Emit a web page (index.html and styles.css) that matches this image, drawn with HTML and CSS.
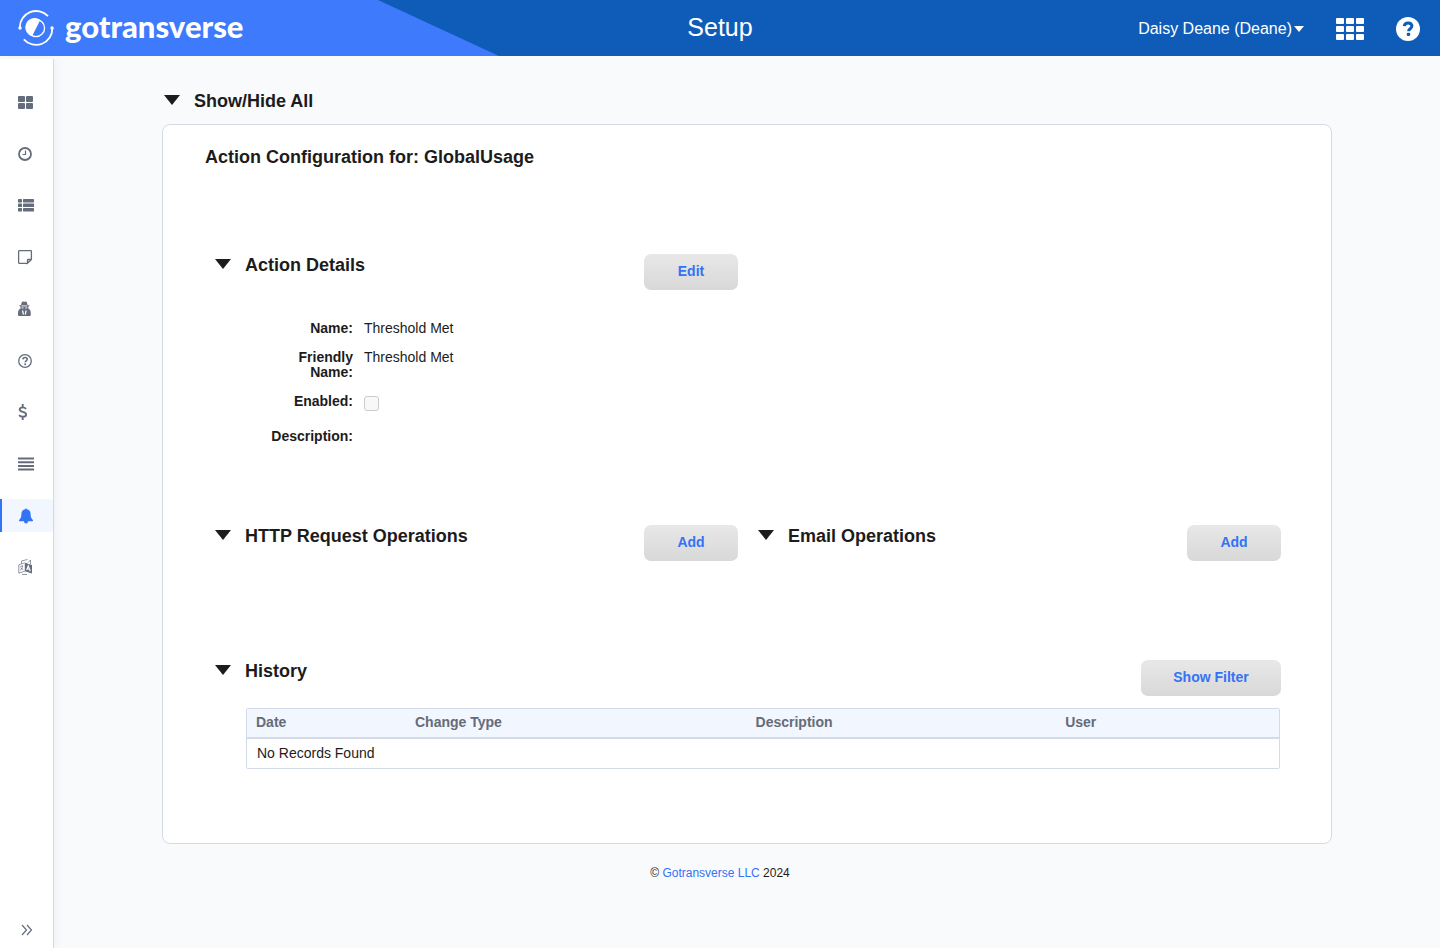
FILE: index.html
```
<!DOCTYPE html>
<html lang="en">
<head>
<meta charset="utf-8">
<title>Setup - gotransverse</title>
<link rel="stylesheet" href="styles.css">
</head>
<body>
<header class="topbar">
  <a class="brand" href="#" aria-label="gotransverse">
    <svg class="brand-mark" width="36" height="36" viewBox="0 0 36 36" fill="none" stroke="#fff" stroke-width="1.8">
      <path d="M1.8 17.5A16.3 16.3 0 0 1 30 6.2"/>
      <path d="M34.3 18A16.3 16.3 0 0 1 5.8 29.4"/>
      <circle cx="2" cy="18" r="1.7" fill="#fff" stroke="none"/>
      <circle cx="34" cy="18" r="1.7" fill="#fff" stroke="none"/>
      <circle cx="18" cy="18" r="8.6" stroke-width="1.3"/>
      <path d="M22.3 10A9.3 9.3 0 1 0 14 26.3Z" fill="#fff" stroke="none"/>
    </svg>
    <span class="brand-name">gotransverse</span>
  </a>
  <h1 class="topbar-title">Setup</h1>
  <div class="topbar-tools">
    <button class="plain user-menu" type="button">Daisy Deane (Deane)<svg width="10" height="6" viewBox="0 0 10 6"><path d="M0 0h10L5 6z" fill="currentColor"/></svg></button>
    <button class="plain" type="button" aria-label="Applications">
      <svg width="28" height="22" viewBox="0 0 28 22" fill="currentColor"><rect width="8" height="6" rx="1"/><rect x="10" width="8" height="6" rx="1"/><rect x="20" width="8" height="6" rx="1"/><rect y="8" width="8" height="6" rx="1"/><rect x="10" y="8" width="8" height="6" rx="1"/><rect x="20" y="8" width="8" height="6" rx="1"/><rect y="16" width="8" height="6" rx="1"/><rect x="10" y="16" width="8" height="6" rx="1"/><rect x="20" y="16" width="8" height="6" rx="1"/></svg>
    </button>
    <button class="plain" type="button" aria-label="Help">
      <svg width="24" height="24" viewBox="0 0 24 24"><circle cx="12" cy="12" r="12" fill="currentColor"/><path d="M8.3 9.2C8.5 7 10 5.9 12.1 5.9c2.2 0 3.8 1.3 3.8 3.200 0 2.600-3.300 2.700-3.300 5.100" fill="none" stroke="#0f5cb8" stroke-width="3"/><rect x="10.8" y="15.8" width="3.4" height="3.2" rx="1" fill="#0f5cb8"/></svg>
    </button>
  </div>
</header>
<div class="shell">
  <aside class="sidebar">
    <nav class="nav" aria-label="Main">
      <a class="nav-item" href="#" aria-label="Dashboard"><svg width="16" height="16" viewBox="0 0 16 16" fill="currentColor"><rect x="0" y="1" width="7" height="6" rx="1"/><rect x="8" y="1" width="7" height="6" rx="1"/><rect x="0" y="8" width="7" height="6" rx="1"/><rect x="8" y="8" width="7" height="6" rx="1"/></svg></a>
      <a class="nav-item" href="#" aria-label="Recent"><svg width="16" height="16" viewBox="0 0 16 16" fill="none" stroke="currentColor"><circle cx="7" cy="8" r="6" stroke-width="1.8"/><path d="M7.500 4.500v4H4.500" stroke-width="1.200"/></svg></a>
      <a class="nav-item" href="#" aria-label="List"><svg width="16" height="16" viewBox="0 0 16 16" fill="currentColor"><rect y="1" width="4" height="3.600" rx=".7"/><rect x="5" y="1" width="11" height="3.600" rx=".7"/><rect y="5.500" width="4" height="3.600" rx=".7"/><rect x="5" y="5.500" width="11" height="3.600" rx=".7"/><rect y="10" width="4" height="3.600" rx=".7"/><rect x="5" y="10" width="11" height="3.600" rx=".7"/></svg></a>
      <a class="nav-item" href="#" aria-label="Notes"><svg width="16" height="16" viewBox="0 0 16 16" fill="none" stroke="currentColor" stroke-width="1.300"><path d="M9.500 14.300H1.200a.6.6 0 0 1-.6-.6V2.300a.6.6 0 0 1 .6-.6h11.600a.6.6 0 0 1 .6.6v8.200l-3.900 3.800v-3.200a.6.600 0 0 1 .6-.6h3.300"/></svg></a>
      <a class="nav-item" href="#" aria-label="Agents"><svg width="16" height="16" viewBox="0 0 16 16"><path d="M3 4 3.800 1.200C4 .4 4.800.3 6.300 1 7.800.3 8.600.4 8.800 1.200L9.600 4l2.400.8-1.700.8v1.800c1.700.8 2.500 2.300 2.500 4.800v1.500c0 .8-.5 1.300-1.300 1.300H1.300C.5 15 0 14.500 0 13.700v-1.500c0-2.500.8-4 2.500-4.800V5.600L.7 4.800z" fill="currentColor"/><path d="M3.400 4.900h5.900M3.500 6.900h2M7.200 6.900h2" stroke="#fff" stroke-width=".9"/><path d="m4.500 9.500 1 4M8.200 9.500l-1 4" stroke="#fff" stroke-width="1.200"/></svg></a>
      <a class="nav-item" href="#" aria-label="Help topics"><svg width="16" height="16" viewBox="0 0 16 16" fill="none" stroke="currentColor"><circle cx="7" cy="8" r="6.300" stroke-width="1.300"/><path d="M4.900 6.400c.1-1.300 1-1.900 2.200-1.900 1.200 0 2.100.7 2.100 1.800 0 1.500-2 1.500-2 3" stroke-width="1.600"/><circle cx="7.200" cy="11.300" r="1" fill="currentColor" stroke="none"/></svg></a>
      <a class="nav-item" href="#" aria-label="Billing"><svg width="16" height="16" viewBox="0 0 16 16" fill="none" stroke="currentColor" stroke-width="1.900"><path d="M8.100 4.800C7.300 4 6 3.400 4.600 3.400c-1.700 0-2.900.7-2.900 2.100C1.700 8.600 8.100 7 8.100 10.400c0 1.500-1.400 2.300-3.200 2.300-1.700 0-3-.6-3.900-1.600M4.700 0v3.500M4.700 12.500V16"/></svg></a>
      <a class="nav-item" href="#" aria-label="Records"><svg width="16" height="16" viewBox="0 0 16 16" fill="currentColor"><path d="M0 1.500h16v2H0zM0 5.200h16v2H0zM0 8.900h16v2H0zM0 12.600h16v2H0z"/></svg></a>
      <a class="nav-item active" href="#" aria-label="Notifications" aria-current="page"><svg width="16" height="16" viewBox="0 0 16 16" fill="currentColor"><path d="M7.200 1.300C7.200.8 7.500.5 8 .5s.8.300.8.8c2.300.4 3.800 2.200 3.800 4.700 0 3.400.9 4.500 2.200 5.900.5.600.1 1.300-.6 1.300H1.800c-.7 0-1.100-.7-.6-1.300 1.300-1.400 2.200-2.500 2.200-5.900 0-2.500 1.500-4.300 3.800-4.700zM6 13h4c0 1.700-.8 2.500-2 2.500S6 14.700 6 13z"/></svg></a>
      <a class="nav-item" href="#" aria-label="Languages"><svg width="16" height="16" viewBox="0 0 16 16"><path d="M6.800 3.800 14 6v8.500l-7.200-2.300z" fill="currentColor"/><path d="M6.800 3.800.8 5.800v8.400l6-2M3.500 4.500V2l6-1.500M10 3.500l2.500-2.500V5M4 15.500h5M2.200 7.500l3-.8M4.500 7c0 2-1 3.600-2.300 4.300M2.500 8.800l2.800 2" fill="none" stroke="currentColor" stroke-width=".7"/><path d="m8.600 11 1.700-4.200 2 5.400M9.300 9.800l2.300.7" fill="none" stroke="#fff" stroke-width="1.100"/></svg></a>
    </nav>
    <button class="plain expand" type="button" aria-label="Expand menu"><svg width="12" height="12" viewBox="0 0 12 12" fill="none" stroke="currentColor" stroke-width="1.200"><path d="m1 1 4.500 5L1 11M6 1l4.500 5L6 11"/></svg></button>
  </aside>
  <div class="page">
    <main class="container">
      <h2 class="title"><svg class="caret" width="16" height="10" viewBox="0 0 16 10"><path d="M0 0h16L8 10z" fill="currentColor"/></svg>Show/Hide All</h2>
      <div class="card">
        <h2 class="card-title">Action Configuration for: GlobalUsage</h2>
        <div class="sections">
          <section class="details">
            <div class="section-head">
              <h3 class="title"><svg class="caret" width="16" height="10" viewBox="0 0 16 10"><path d="M0 0h16L8 10z" fill="currentColor"/></svg>Action Details</h3>
              <button class="btn" type="button">Edit</button>
            </div>
            <div class="fields">
              <span class="label">Name:</span><span>Threshold Met</span>
              <span class="label">Friendly Name:</span><span>Threshold Met</span>
              <label class="label" for="enabled">Enabled:</label><input class="check" id="enabled" type="checkbox" disabled>
              <span class="label">Description:</span><span></span>
            </div>
          </section>
          <section class="operations">
            <div class="section-head">
              <h3 class="title"><svg class="caret" width="16" height="10" viewBox="0 0 16 10"><path d="M0 0h16L8 10z" fill="currentColor"/></svg>HTTP Request Operations</h3>
              <button class="btn" type="button">Add</button>
            </div>
          </section>
          <section class="operations">
            <div class="section-head">
              <h3 class="title"><svg class="caret" width="16" height="10" viewBox="0 0 16 10"><path d="M0 0h16L8 10z" fill="currentColor"/></svg>Email Operations</h3>
              <button class="btn" type="button">Add</button>
            </div>
          </section>
          <section class="history">
            <div class="section-head">
              <h3 class="title"><svg class="caret" width="16" height="10" viewBox="0 0 16 10"><path d="M0 0h16L8 10z" fill="currentColor"/></svg>History</h3>
              <button class="btn btn-wide" type="button">Show Filter</button>
            </div>
            <div class="table-wrap">
              <table class="table">
                <colgroup><col class="col-date"><col class="col-type"><col class="col-desc"><col></colgroup>
                <thead><tr><th>Date</th><th>Change Type</th><th>Description</th><th>User</th></tr></thead>
                <tbody><tr><td colspan="4">No Records Found</td></tr></tbody>
              </table>
            </div>
          </section>
        </div>
      </div>
    </main>
    <footer class="footer">© <a href="#">Gotransverse LLC</a> 2024</footer>
  </div>
</div>
</body>
</html>
```
FILE: styles.css
```
* {
  box-sizing: border-box;
}

body {
  margin: 0;
  min-height: 100vh;
  display: flex;
  flex-direction: column;
  background: #f9fafc;
  color: #1c1c1c;
  font: 14px/16px "Liberation Sans", Arial, sans-serif;
}

h1, h2, h3 {
  margin: 0;
}

svg {
  display: block;
  flex: none;
}

a {
  color: #3373f5;
  text-decoration: none;
}

.plain {
  padding: 0;
  border: 0;
  background: none;
  color: inherit;
  font: inherit;
  cursor: pointer;
}

/* Top bar */
.topbar {
  display: grid;
  grid-template-columns: 1fr auto 1fr;
  align-items: center;
  height: 56px;
  background: #0f5cb8;
  color: #fff;
}

.brand {
  display: flex;
  align-items: center;
  gap: 11px;
  width: 499px;
  height: 56px;
  padding-left: 18px;
  background: #3d7afc;
  clip-path: polygon(0 0, 378px 0, 100% 100%, 0 100%);
  color: #fff;
}

.brand-name {
  padding-bottom: 4px;
  font: 900 31px/36px Lato, sans-serif;
}

.topbar-title {
  padding-bottom: 2px;
  font-size: 25px;
  font-weight: 400;
  line-height: 32px;
}

.topbar-tools {
  display: flex;
  align-items: center;
  justify-content: flex-end;
  gap: 32px;
  padding: 2px 20px 0 0;
}

.user-menu {
  display: flex;
  align-items: center;
  gap: 2px;
  font-size: 16px;
  line-height: 20px;
}

/* Sidebar */
.shell {
  flex: 1;
  display: flex;
}

.sidebar {
  display: flex;
  flex-direction: column;
  justify-content: space-between;
  width: 54px;
  margin-top: 3px;
  padding: 27px 0 12px;
  border-right: 1px solid #d5d9e4;
  background: #fff;
  box-shadow: 2px 0 8px rgba(60, 90, 150, .06);
  color: #656c7b;
}

.nav {
  display: flex;
  flex-direction: column;
  justify-content: space-between;
  height: 498px;
}

.nav-item {
  display: flex;
  align-items: center;
  height: 33px;
  padding-left: 16px;
  border-left: 2px solid transparent;
  color: inherit;
}

.nav-item.active {
  border-left-color: #3373f5;
  border-radius: 0 3px 3px 0;
  background: #f1f6ff;
  color: #3373f5;
}

.expand {
  padding-left: 21px;
}

/* Page */
.page {
  flex: 1;
  display: flex;
  flex-direction: column;
}

.container {
  width: 100%;
  max-width: 1170px;
  margin: 0 auto;
  padding-top: 34px;
}

.title {
  display: flex;
  align-items: center;
  gap: 14px;
  font-size: 18px;
  line-height: 22px;
}

.caret {
  margin-bottom: 2px;
}

.container > .title {
  padding-left: 2px;
}

.card {
  margin-top: 12px;
  padding: 21px 50px 74px 42px;
  border: 1px solid #d5dae5;
  border-radius: 8px;
  background: #fff;
}

.card-title {
  font-size: 18px;
  line-height: 22px;
}

.sections {
  display: grid;
  grid-template-columns: 1fr 1fr;
  column-gap: 20px;
  padding: 86px 0 0 10px;
}

.section-head {
  display: flex;
  align-items: flex-start;
  justify-content: space-between;
}

.operations {
  grid-row: 2;
  padding: 81px 0 99px;
}

.history {
  grid-column: 1 / -1;
}

.btn {
  min-width: 94px;
  height: 36px;
  padding: 0 10px 3px;
  border: 0;
  border-radius: 7px;
  background: linear-gradient(#e8e8e8, #d8d8d8);
  color: #3373f5;
  font: bold 14px/16px "Liberation Sans", Arial, sans-serif;
  cursor: pointer;
}

.btn-wide {
  min-width: 140px;
}

.fields {
  display: grid;
  grid-template-columns: 138px 1fr;
  gap: 14px 11px;
  padding-top: 31px;
  line-height: 15px;
}

.label {
  padding-left: 56px;
  font-weight: bold;
  text-align: right;
}

.check {
  appearance: none;
  width: 15px;
  height: 15px;
  margin: 2px 0 4px;
  border: 1px solid #ccc;
  border-radius: 3px;
  background: #f8f8f8;
}

/* History table */
.table-wrap {
  margin: 12px 1px 0 31px;
  border: 1px solid #d5dae8;
  border-radius: 2px;
}

.table {
  width: 100%;
  border-collapse: collapse;
  table-layout: fixed;
  text-align: left;
}

.col-date {
  width: 159px;
}

.col-type {
  width: 33%;
}

.col-desc {
  width: 30%;
}

.table th {
  padding: 5px 9px 7px;
  border-bottom: 2px solid #d5dae8;
  background: #f1f6ff;
  color: #656c78;
}

.table td {
  padding: 6px 10px 7px;
}

.footer {
  padding: 21px 54px 21px 0;
  font-size: 12px;
  text-align: center;
}
```
